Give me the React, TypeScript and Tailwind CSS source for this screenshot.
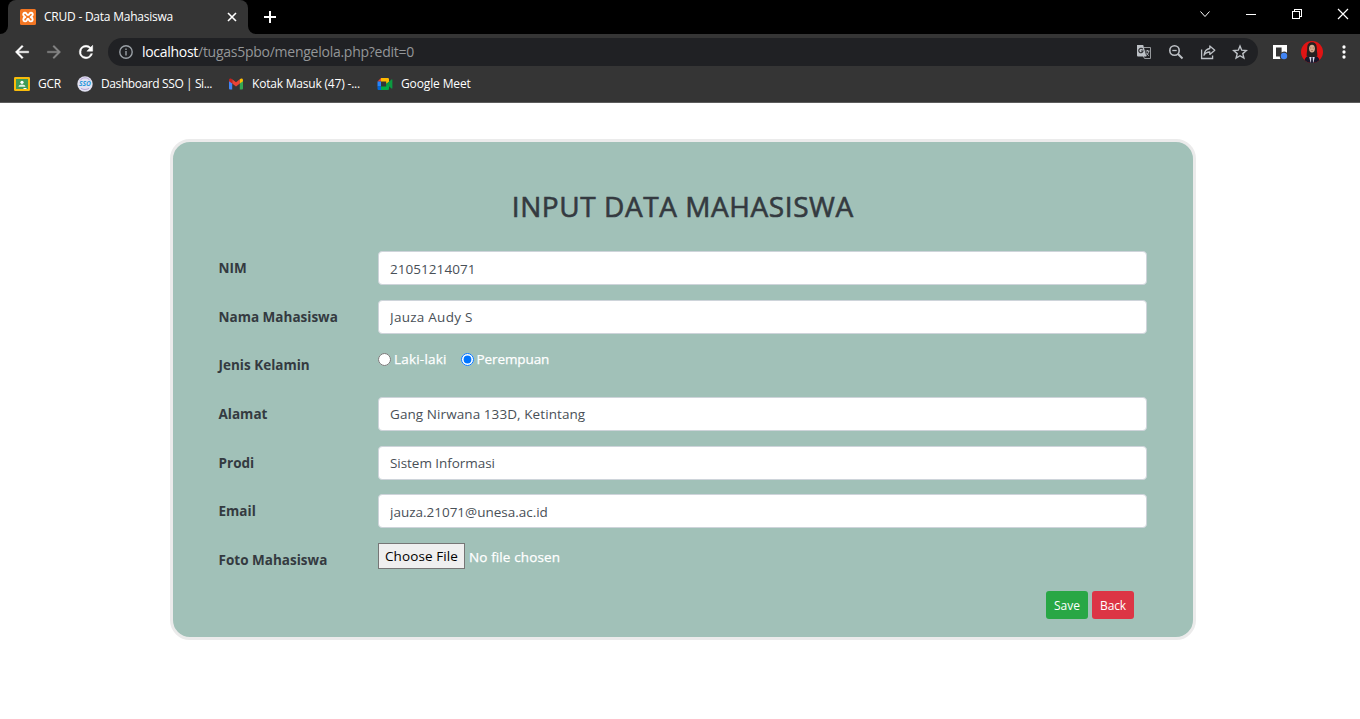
import React from "react";

const BACK_PATH = "M20 11H7.83l5.59-5.59L12 4l-8 8 8 8 1.41-1.41L7.83 13H20v-2z";

function XamppIcon() {
  return (
    <svg width="16" height="16" viewBox="0 0 16 16">
      <rect width="16" height="16" rx="1.5" fill="#f37623" />
      <path
        d="M5.300 3.700C3.500 3.500 2.900 5.100 3.400 6.200c.4.900 1.100 1.400 1.900 1.800-1.100.4-2 1.200-2 2.400 0 2.400 3 2.500 3.600.8.300-.9.500-1.400 1.100-1.400s.8.500 1.100 1.400c.6 1.700 3.600 1.600 3.600-.8 0-1.200-.9-2-2-2.400.8-.4 1.500-.9 1.900-1.800.5-1.100-.1-2.700-1.900-2.500-1.500.2-1.100 2.300-2.700 2.300S6.800 3.900 5.300 3.700z"
        fill="none"
        stroke="#fff"
        strokeWidth="1.900"
        strokeLinejoin="round"
      />
    </svg>
  );
}

function TabStrip() {
  return (
    <div className="flex h-[34px] bg-black">
      <div className="flex w-2 items-end bg-[#353535]">
        <div className="h-full w-2 rounded-br-lg bg-black" />
      </div>
      <div className="bg-black">
        <div className="flex h-[34px] w-60 items-center rounded-t-lg bg-[#353535] pr-[10px] pl-3">
          <XamppIcon />
          <span className="ml-2 flex-1 text-xs tracking-[-0.232px] whitespace-nowrap text-white">CRUD - Data Mahasiswa</span>
          <svg width="12" height="12" viewBox="0 0 12 12" stroke="#fff" strokeWidth="1.6">
            <path d="M2 2l8 8M10 2l-8 8" />
          </svg>
        </div>
      </div>
      <div className="w-2 bg-[#353535]">
        <div className="h-full w-2 rounded-bl-lg bg-black" />
      </div>
      <div className="flex flex-1 items-center pl-2">
        <svg width="12" height="12" viewBox="0 0 12 12" stroke="#fff" strokeWidth="2">
          <path d="M6 0v12M0 6h12" />
        </svg>
      </div>
      <div className="flex h-7 items-center">
        <svg width="160" height="28" viewBox="1200 0 160 28" fill="none" stroke="#fff">
          <path d="M1200.500 11.500l4.500 5 4.500-5" strokeWidth="1" />
          <path d="M1246 14.500h10" shapeRendering="crispEdges" />
          <path d="M1292.500 11.500h7v7h-7z M1294.500 11.500v-2h7v7h-2" shapeRendering="crispEdges" />
          <path d="M1338 9l10 10M1348 9l-10 10" strokeWidth="1.2" />
        </svg>
      </div>
    </div>
  );
}

function OmniboxActions() {
  return (
    <div className="flex items-center gap-4">
      <svg width="16" height="16" viewBox="0 0 16 16">
        <path d="M8 3.500h6.500v11H8.500l-1.200-2.500" fill="none" stroke="#96999c" strokeWidth="1" />
        <path d="M1 1h6.200l3.200 11.500H2a1 1 0 0 1-1-1z" fill="#bdc1c6" />
        <path d="M6.800 5.300A2.200 2.200 0 1 0 7.100 7H5" fill="none" stroke="#292a2d" strokeWidth="1.100" />
        <path d="M9.500 7h4M11.500 6v1M12.800 7c-.4 2-1.300 3.500-2.600 4.500M10.300 8.500c.6 1.400 1.500 2.400 2.600 3.200" fill="none" stroke="#bdc1c6" strokeWidth=".9" />
      </svg>
      <svg width="16" height="16" viewBox="0 0 16 16" fill="none" stroke="#bdc1c6" strokeWidth="1.6">
        <circle cx="6.500" cy="6.500" r="4.700" />
        <path d="M10 10l4.500 4.500" strokeWidth="1.900" />
        <path d="M4.300 6.500h4.400" strokeWidth="1.300" />
      </svg>
      <svg width="16" height="16" viewBox="0 0 16 16" fill="none" stroke="#bdc1c6" strokeWidth="1.300">
        <path d="M1.600 5.500v9h11v-3" />
        <path d="M9.800 2l5 4.200-5 4.200V8C7 8 5.300 9 4 11.200 4.400 7.600 6.400 5 9.800 4.500z" strokeLinejoin="round" />
      </svg>
      <svg width="16" height="16" viewBox="0 0 16 16" fill="none" stroke="#bdc1c6" strokeWidth="1.400">
        <path d="M8 2l1.700 4.200 4.600.4-3.500 3 1.100 4.500L8 11.700l-3.900 2.400 1.100-4.500-3.500-3 4.600-.4z" />
      </svg>
    </div>
  );
}

function ProfilePhoto() {
  return (
    <svg width="22" height="22" viewBox="0 0 22 22">
      <clipPath id="avatar">
        <circle cx="11" cy="11" r="11" />
      </clipPath>
      <g clipPath="url(#avatar)">
        <rect width="22" height="22" fill="#e01414" />
        <path d="M3 22c.3-4 1.500-6 4-6.800h8c2.500.8 3.700 2.800 4 6.800z" fill="#17172a" />
        <path d="M11 1.200c-3.500 0-4.800 2.600-4.800 5.800 0 3.500-.8 5.500-.5 8.300L11 17l5.300-1.700c.3-2.800-.5-4.800-.5-8.300 0-3.200-1.300-5.800-4.800-5.800z" fill="#25201f" />
        <ellipse cx="11" cy="7.600" rx="2.900" ry="3.900" fill="#d5ad90" />
        <path d="M9 7h1.300M11.700 7H13M10 9.600h2" stroke="#7d4e3c" strokeWidth=".6" />
        <path d="M8.300 16h5.400l-1.200 5.500h-3z" fill="#d9d9e8" />
        <path d="M10.300 16.300h1.400l.4 5.700H9.900z" fill="#1c1c32" />
      </g>
    </svg>
  );
}

function Toolbar() {
  return (
    <div className="flex h-9 items-center pr-[10px] pl-3">
      <svg className="h-5 w-5" viewBox="0 0 24 24" fill="#fff"><path d={BACK_PATH} stroke="#fff" strokeWidth=".5" /></svg>
      <svg className="ml-3 h-5 w-5 -scale-x-100" viewBox="0 0 24 24" fill="#858585"><path d={BACK_PATH} stroke="#858585" strokeWidth=".4" /></svg>
      <svg className="ml-3 h-5 w-5" viewBox="0 0 24 24" fill="#fff">
        <path d="M17.650 6.350A7.960 7.960 0 0 0 12 4a8 8 0 1 0 7.730 10h-2.080A6 6 0 1 1 12 6c1.660 0 3.140.69 4.220 1.780L13 11h7V4l-2.350 2.350z" stroke="#fff" strokeWidth=".6" />
      </svg>
      <div className="ml-3 flex h-7 w-[1150px] items-center rounded-full bg-[#202124] pr-[10px] pl-[11px]">
        <svg width="14" height="14" viewBox="0 0 14 14" fill="none" stroke="#9aa0a6" strokeWidth="1.400">
          <circle cx="7" cy="7" r="6.200" />
          <path d="M7 6v4.500M7 3.500v1.400" />
        </svg>
        <div className="ml-[9px] flex-1 text-sm whitespace-nowrap text-[#949698]">
          <span className="tracking-[-0.295px] text-white">localhost</span>
          <span className="tracking-[-0.258px]">/tugas5pbo/mengelola.php?edit=0</span>
        </div>
        <OmniboxActions />
      </div>
      <svg className="ml-[14px]" width="16" height="16" viewBox="0 0 16 16">
        <path d="M1 1h14v7.800a4.400 4.400 0 0 0-5.400-.3V3.500H4v9h3.800c0 1 .2 1.700.7 2.500H1z" fill="#fff" />
        <circle cx="12" cy="12" r="3.200" fill="#4285f4" />
      </svg>
      <div className="ml-[13px]"><ProfilePhoto /></div>
      <svg className="ml-auto" width="12" height="16" viewBox="0 0 12 16" fill="#fff">
        <circle cx="6" cy="3" r="1.650" />
        <circle cx="6" cy="8" r="1.650" />
        <circle cx="6" cy="13" r="1.650" />
      </svg>
    </div>
  );
}

function BookmarksBar() {
  return (
    <div className="flex h-8 items-center border-b border-[#5c5c5c] pb-[5px] pl-[14px] text-xs whitespace-nowrap text-white">
      <svg width="16" height="14" viewBox="0 0 16 14">
        <rect width="16" height="14" rx="1.200" fill="#f8bb0b" />
        <rect x="2" y="2" width="12" height="10" fill="#3f9b57" />
        <circle cx="8" cy="5.300" r="1.600" fill="#fff" />
        <path d="M4.500 9.700c.2-1.600 1.700-2.300 3.500-2.300s3.300.7 3.500 2.300z" fill="#e4f2e7" />
        <path d="M9.500 11h3v1h-3z" fill="#fff" />
      </svg>
      <span className="ml-2 w-[39px] tracking-[-0.234px]">GCR</span>
      <svg width="16" height="16" viewBox="0 0 16 16">
        <circle cx="8" cy="8" r="7.700" fill="#e2e2f2" />
        <path d="M3 4.500a6 6 0 0 1 10 0M4 12.300c2.500 1.600 5.500 1.600 8 0" fill="none" stroke="#b9a6d8" />
        <text x="8" y="10.300" textAnchor="middle" fontSize="6.500" fontWeight="700" fontStyle="italic" fill="#2b9bdc" textLength="12" lengthAdjust="spacingAndGlyphs">SSO</text>
      </svg>
      <span className="ml-2 w-[127px] tracking-[-0.402px]">Dashboard SSO | Si...</span>
      <svg width="16" height="16" viewBox="0 0 16 16">
        <path d="M1 4.500l3.200 2.400v6.600H2a1 1 0 0 1-1-1z" fill="#4285f4" />
        <path d="M15 4.500l-3.200 2.400v6.600H14a1 1 0 0 0 1-1z" fill="#34a853" />
        <path d="M4.200 3.300L8 6.200l3.800-2.900v4.200L8 10.400 4.200 7.500z" fill="#ea4335" />
        <path d="M1 4.200c0-1.800 1.800-2.200 3.200-.9v4.200L1 5.200z" fill="#c5221f" />
        <path d="M15 4.200c0-1.800-1.800-2.200-3.200-.9v4.200L15 5.200z" fill="#fbbc04" />
      </svg>
      <span className="ml-2 w-[125px] tracking-[-0.197px]">Kotak Masuk (47) -...</span>
      <svg width="16" height="16" viewBox="0 0 16 16">
        <path d="M4 2v3.500H.5z" fill="#ea4335" />
        <path d="M.5 5.500H4v5H.5z" fill="#2684fc" />
        <path d="M.5 10.500H4V14H1.700A1.200 1.200 0 0 1 .5 12.800z" fill="#0066da" />
        <path d="M4 2h6.800A1.200 1.200 0 0 1 12 3.200V6L9.200 8V5.500H4z" fill="#ffba00" />
        <path d="M4 10.500h5.200V8L12 5.700v7.100a1.200 1.200 0 0 1-1.200 1.200H4z" fill="#00ac47" />
        <path d="M9.200 8L14.500 3.500c.4-.3.900-.1.900.4v8.200c0 .5-.5.700-.9.400z" fill="#0b9a40" />
      </svg>
      <span className="ml-2 tracking-[-0.131px]">Google Meet</span>
    </div>
  );
}

function Field({ label, children }: { label: string; children: React.ReactNode }) {
  return (
    <div className="flex h-[48.650px] items-start">
      <div className="w-[159.500px] shrink-0 pt-[6px] text-[13.5px] leading-[22px] font-bold tracking-[0.01px] whitespace-nowrap text-[#343a40]">{label}</div>
      {children}
    </div>
  );
}

function TextInput({ value, tracking }: { value: string; tracking: string }) {
  return (
    <input
      type="text"
      defaultValue={value}
      className={`h-[34px] flex-1 rounded border border-[#ced4da] bg-white px-[11px] pt-px text-[13.5px] text-[#495057] outline-none ${tracking}`}
    />
  );
}

export default function App() {
  return (
    <div className="flex h-[719px] w-[1360px] flex-col overflow-hidden bg-white font-['Open_Sans','Noto_Sans',sans-serif]">
      <header className="flex h-[103px] flex-col bg-[#353535]">
        <TabStrip />
        <Toolbar />
        <div className="flex flex-1 flex-col justify-end"><BookmarksBar /></div>
      </header>
      <main className="mt-9 ml-[170px] h-[501px] w-[1026px] rounded-[20px] border-[3px] border-[#ebebeb] bg-[#a1c1b8] pr-[46px] pl-[45.500px]">
        <h1 className="pt-[43px] text-center text-[28px] leading-[42px] font-normal tracking-[0.57px] text-[#343a40] [-webkit-text-stroke:0.6px_#343a40]">INPUT DATA MAHASISWA</h1>
        <form className="mt-6">
          <Field label="NIM"><TextInput value="21051214071" tracking="tracking-[0.05px]" /></Field>
          <Field label="Nama Mahasiswa"><TextInput value="Jauza Audy S" tracking="tracking-[0.26px]" /></Field>
          <Field label="Jenis Kelamin">
            <div className="flex h-[22px] items-center text-[13.5px] text-white [-webkit-text-stroke:0.25px_#fff]">
              <input type="radio" name="jk" className="m-0 h-[13px] w-[13px]" />
              <span className="ml-[3px] w-[66.500px] tracking-[0.2px]">Laki-laki</span>
              <input type="radio" name="jk" defaultChecked className="m-0 h-[13px] w-[13px]" />
              <span className="ml-[3px] tracking-[-0.1px]">Perempuan</span>
            </div>
          </Field>
          <Field label="Alamat"><TextInput value="Gang Nirwana 133D, Ketintang" tracking="tracking-[0.08px]" /></Field>
          <Field label="Prodi"><TextInput value="Sistem Informasi" tracking="tracking-[-0.05px]" /></Field>
          <Field label="Email"><TextInput value="jauza.21071@unesa.ac.id" tracking="tracking-[-0.01px]" /></Field>
          <Field label="Foto Mahasiswa">
            <div className="flex items-center text-[13.5px] whitespace-nowrap">
              <button type="button" className="h-[26px] w-[87px] border border-[#767676] bg-[#efefef] text-[13.5px] tracking-[0.1px] text-black">Choose File</button>
              <span className="ml-1 pt-[2px] tracking-[0.12px] text-white [-webkit-text-stroke:0.25px_#fff]">No file chosen</span>
            </div>
          </Field>
          <div className="flex justify-end gap-1 pr-[13px] text-xs text-white">
            <button type="button" className="h-7 w-[42px] rounded-[3px] bg-[#28a745] pt-px">Save</button>
            <button type="button" className="h-7 w-[42px] rounded-[3px] bg-[#dc3545] pt-px tracking-[-0.121px]">Back</button>
          </div>
        </form>
      </main>
    </div>
  );
}
